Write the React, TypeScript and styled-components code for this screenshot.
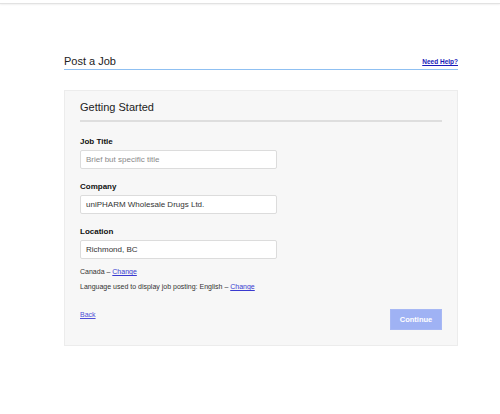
import styled, { createGlobalStyle } from "styled-components";

const GlobalStyle = createGlobalStyle`
  body {
    margin: 0;
    background: #fff;
    font-family: "Liberation Sans", Arial, sans-serif;
    color: #333;
  }
`;

const TopBar = styled.div`
  height: 3px;
  border-bottom: 1px solid #e2e2e2;
  box-shadow: 0 1px 2px rgba(0, 0, 0, 0.06);
`;

const Page = styled.main`
  width: 394px;
  margin: 50px 0 0 64px;
`;

const PageHeader = styled.header`
  display: flex;
  justify-content: space-between;
  align-items: flex-end;
  padding-bottom: 1px;
  border-bottom: 1px solid #8fc0f2;
`;

const PageTitle = styled.h1`
  margin: 0;
  font-size: 11px;
  font-weight: normal;
  line-height: 14px;
  color: #222;
`;

const HelpLink = styled.a`
  font-size: 6.5px;
  font-weight: bold;
  color: #1a1ab8;
  text-decoration: underline;
  line-height: 10px;
  margin-bottom: 1px;
`;

const Card = styled.section`
  margin-top: 20px;
  background: #f7f7f7;
  border: 1px solid #ececec;
  padding: 9px 15px 15px 15px;
`;

const CardTitle = styled.h2`
  margin: 0;
  font-size: 11px;
  font-weight: normal;
  line-height: 14px;
  color: #222;
  padding-bottom: 6px;
  border-bottom: 2px solid #dedede;
`;

const Field = styled.div<{ $first?: boolean }>`
  display: flex;
  flex-direction: column;
  gap: 3px;
  margin-top: ${(p) => (p.$first ? "15px" : "13px")};
`;

const Label = styled.label`
  font-size: 8px;
  font-weight: bold;
  line-height: 10px;
  color: #111;
`;

const Input = styled.input`
  box-sizing: border-box;
  width: 197px;
  height: 19px;
  border: 1px solid #dcdcdc;
  border-radius: 2px;
  background: #fff;
  padding: 0 5px;
  font-family: "Liberation Sans", Arial, sans-serif;
  font-size: 8px;
  color: #333;
  outline: none;

  &::placeholder {
    color: #8a8a8a;
  }
`;

const Note = styled.p<{ $gap?: string }>`
  margin: ${(p) => p.$gap || "0"} 0 0;
  font-size: 7px;
  line-height: 10px;
  color: #333;
`;

const TextLink = styled.a`
  color: #3a3ad0;
  text-decoration: underline;
`;

const Actions = styled.div`
  display: flex;
  justify-content: space-between;
  align-items: flex-start;
  margin-top: 17px;
`;

const BackLink = styled.a`
  font-size: 7px;
  line-height: 10px;
  margin-top: 1px;
  color: #4f4fd8;
  text-decoration: underline;
`;

const ContinueButton = styled.button`
  width: 52px;
  height: 21px;
  border: 1px solid #a7b8f4;
  background: #9fb2f4;
  color: #fff;
  font-family: "Liberation Sans", Arial, sans-serif;
  font-size: 7.5px;
  font-weight: bold;
  padding: 0;
  cursor: default;
`;

export default function App() {
  return (
    <>
      <GlobalStyle />
      <TopBar />
      <Page>
        <PageHeader>
          <PageTitle>Post a Job</PageTitle>
          <HelpLink href="#">Need Help?</HelpLink>
        </PageHeader>

        <Card>
          <CardTitle>Getting Started</CardTitle>

          <Field $first>
            <Label>Job Title</Label>
            <Input placeholder="Brief but specific title" />
          </Field>

          <Field>
            <Label>Company</Label>
            <Input defaultValue="uniPHARM Wholesale Drugs Ltd." />
          </Field>

          <Field>
            <Label>Location</Label>
            <Input defaultValue="Richmond, BC" />
          </Field>

          <Note $gap="8px">
            Canada – <TextLink href="#">Change</TextLink>
          </Note>
          <Note $gap="5px">
            Language used to display job posting: English –{" "}
            <TextLink href="#">Change</TextLink>
          </Note>

          <Actions>
            <BackLink href="#">Back</BackLink>
            <ContinueButton>Continue</ContinueButton>
          </Actions>
        </Card>
      </Page>
    </>
  );
}
